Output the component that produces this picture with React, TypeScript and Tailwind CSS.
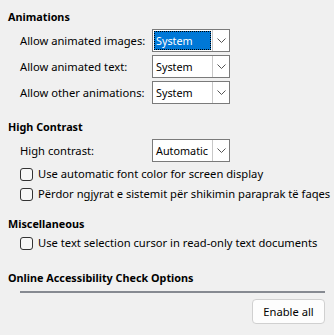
import React from 'react';

const Chevron = () => (
  <svg width="9" height="5" viewBox="0 0 9 5" fill="none">
    <path d="M0.5 0.5 L4.5 4.5 L8.5 0.5" stroke="#555" strokeWidth="1" />
  </svg>
);

function Combo({ value, selected = false }: { value: string; selected?: boolean }) {
  return (
    <div className="flex h-[23px] w-[78px] border border-[#7a7a7a] bg-white text-[10.8px]">
      <div className="flex-1 overflow-hidden p-px">
        <div
          className={
            selected
              ? 'flex h-full items-center border border-dotted border-black bg-[#0078d7] pl-px text-white'
              : 'flex h-full items-center pl-[2px]'
          }
        >
          {value}
        </div>
      </div>
      <div className="flex w-[17px] items-center justify-center border-l border-[#c8c8c8]">
        <Chevron />
      </div>
    </div>
  );
}

function Check({ label }: { label: string }) {
  return (
    <div className="flex h-[20px] items-center gap-[5px] pl-[12px]">
      <div className="h-[13px] w-[13px] shrink-0 rounded-[3px] border border-[#333] bg-[#f7f7f7]" />
      <span className="whitespace-nowrap">{label}</span>
    </div>
  );
}

const animationRows = [
  { label: 'Allow animated images:', selected: true },
  { label: 'Allow animated text:', selected: false },
  { label: 'Allow other animations:', selected: false },
];

export default function App() {
  return (
    <div
      className="h-[335px] w-[334px] overflow-hidden whitespace-nowrap bg-[#f0f0f0] pl-[8px] pt-[9px] text-[11.2px] leading-[16px] text-black"
      style={{ fontFamily: '"Noto Sans", "Segoe UI", sans-serif' }}
    >
      {/* Animations */}
      <h2 className="text-[10.8px] font-bold">Animations</h2>
      <div className="mt-[4px] flex flex-col gap-[3px]">
        {animationRows.map((row) => (
          <div key={row.label} className="flex items-center pl-[12px]">
            <span className="w-[132px]">{row.label}</span>
            <Combo value="System" selected={row.selected} />
          </div>
        ))}
      </div>

      {/* High Contrast */}
      <h2 className="mt-[15px] text-[10.8px] font-bold">High Contrast</h2>
      <div className="mt-[4px] flex items-center pl-[12px]">
        <span className="w-[132px]">High contrast:</span>
        <Combo value="Automatic" />
      </div>
      <div className="mt-[2px]">
        <Check label="Use automatic font color for screen display" />
        <Check label="Përdor ngjyrat e sistemit për shikimin paraprak të faqes" />
      </div>

      {/* Miscellaneous */}
      <h2 className="mt-[12px] text-[10.8px] font-bold">Miscellaneous</h2>
      <div className="mt-[1px]">
        <Check label="Use text selection cursor in read-only text documents" />
      </div>

      {/* Online Accessibility Check Options */}
      <h2 className="mt-[17px] text-[10.8px] font-bold">Online Accessibility Check Options</h2>
      <div className="ml-[12px] mr-[9px] mt-[5px] h-[2px] bg-[#868a91]" />
      <div className="mr-[9px] mt-[6px] flex justify-end">
        <button className="h-[25px] w-[73px] rounded-[4px] border border-[#d0d0d0] bg-[#fdfdfd] text-[11.2px]">
          Enable all
        </button>
      </div>
    </div>
  );
}
